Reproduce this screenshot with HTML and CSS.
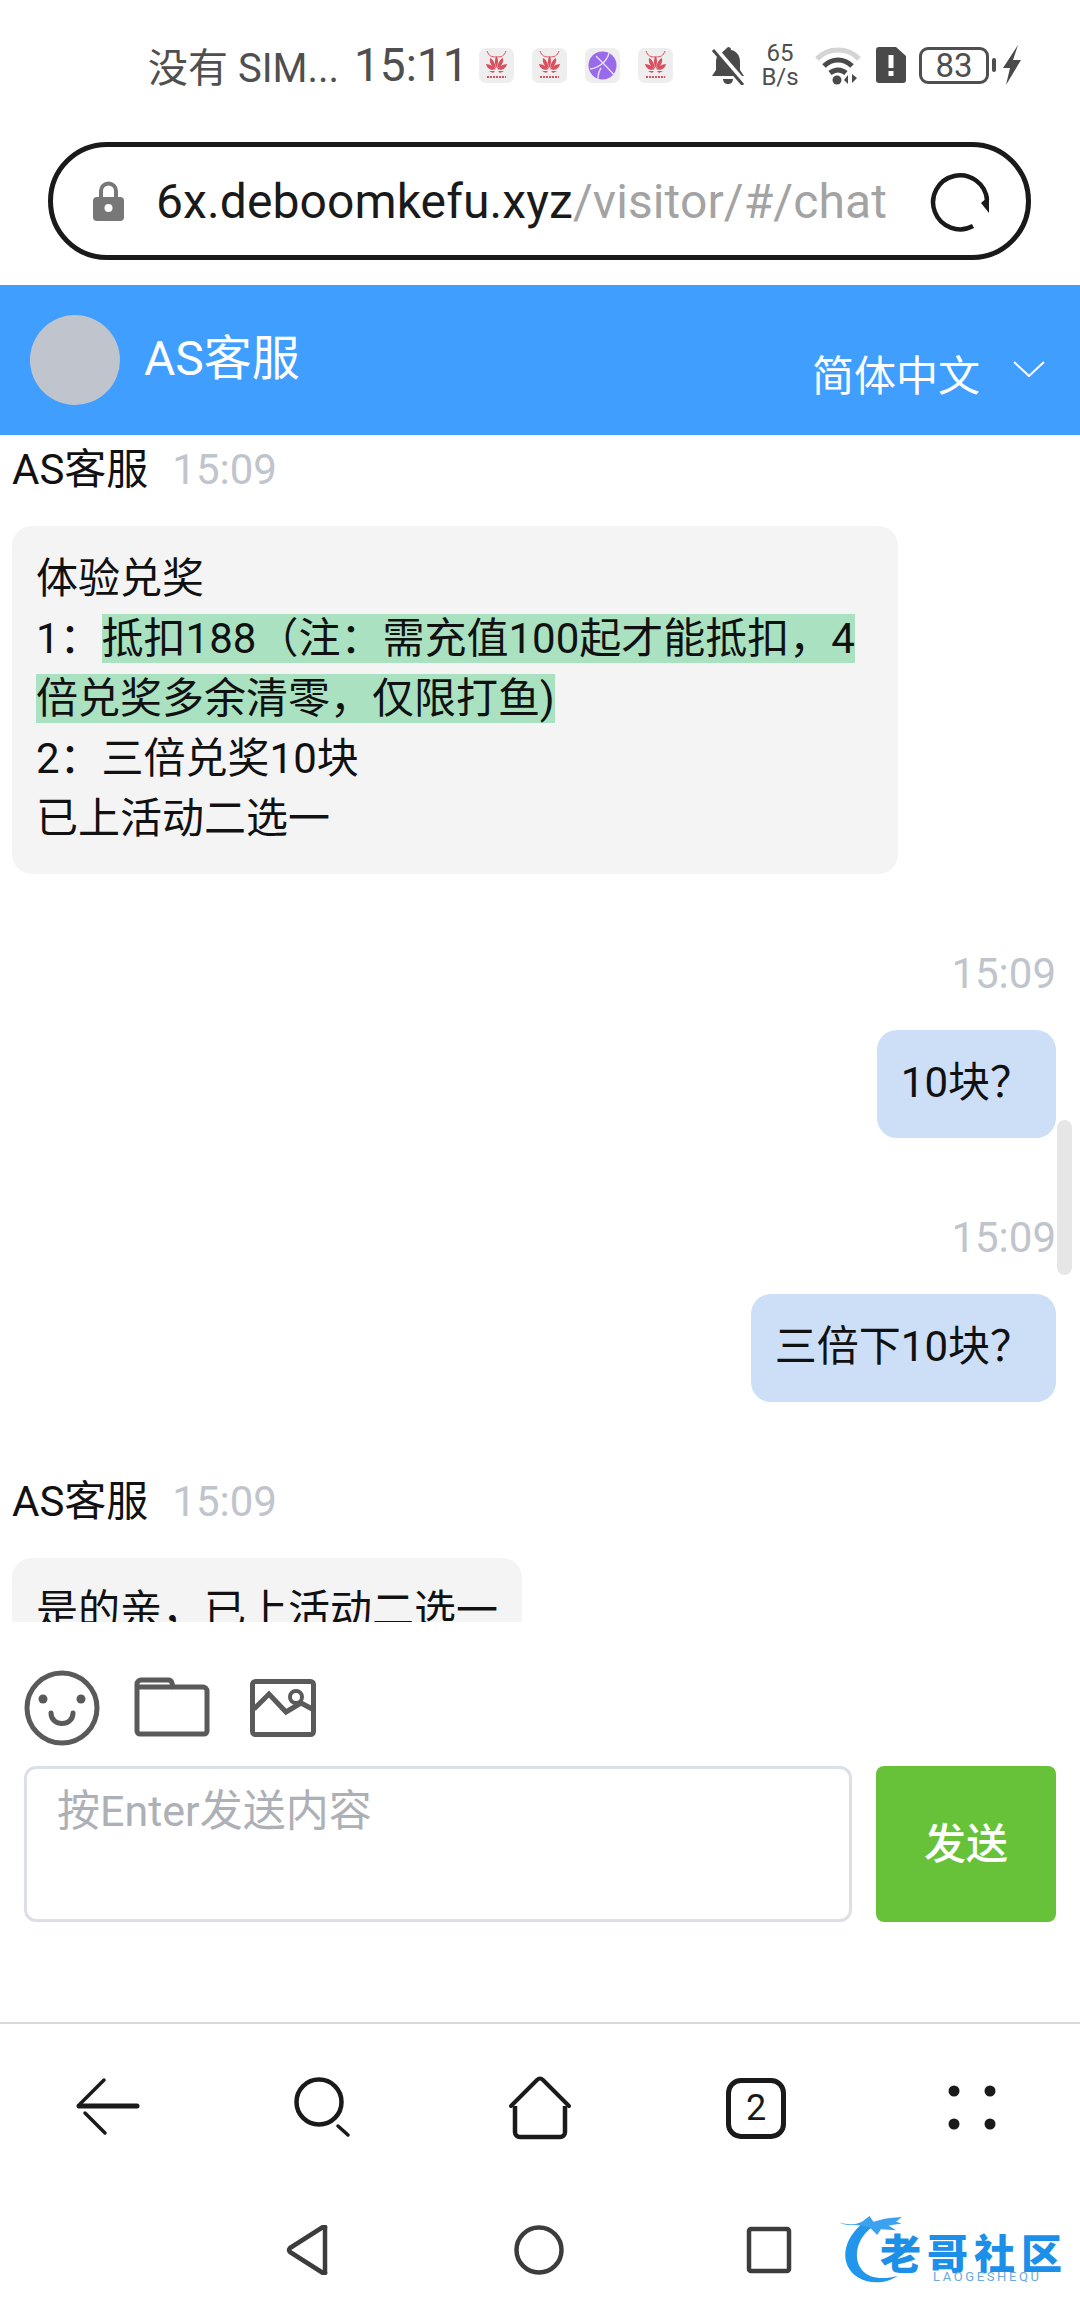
FILE: index.html
```html
<!DOCTYPE html>
<html lang="zh-CN">

<head>
    <meta charset="UTF-8">
    <meta name="viewport" content="width=device-width, initial-scale=1.0">
    <title>AS客服</title>
    <link rel="stylesheet" href="styles.css">
</head>

<body>
    <div class="phone">
        <!-- status bar -->
        <div class="status">
            <span class="carrier">没有 SIM...</span>
            <span class="clock">15:11</span>
            <div class="tiles">
                <svg class="tile" viewBox="0 0 35 35"><use href="#shop"/></svg>
                <svg class="tile" viewBox="0 0 35 35"><use href="#shop"/></svg>
                <svg class="tile" viewBox="0 0 35 35">
                    <rect width="35" height="35" rx="7" fill="#eeeeee"/>
                    <circle cx="17.5" cy="17.5" r="14" fill="#9a6be8"/>
                    <path d="M5 21C13 20 22 14 24 5M11 8c6 6 14 14 18 19M13 31c0-4 1-8 3-11" fill="none" stroke="#e6dcfb" stroke-width="1.4"/>
                </svg>
                <svg class="tile" viewBox="0 0 35 35"><use href="#shop"/></svg>
            </div>
            <svg class="st-bell" viewBox="0 0 34 40">
                <path d="M17 2c2 0 3 1 3 3 6 1 9 6 9 12v8l4 6H1l4-6v-8c0-2 .4-4 1-5z" fill="#4a4a4a"/>
                <path d="M12 34h10c0 3-2 5-5 5s-5-2-5-5z" fill="#4a4a4a"/>
                <path d="M3 3l30 35" stroke="#fff" stroke-width="6"/>
                <path d="M2 5l30 35" stroke="#4a4a4a" stroke-width="3"/>
            </svg>
            <div class="speed"><span>65</span><span>B/s</span></div>
            <svg class="st-wifi" viewBox="0 0 46 40">
                <path d="M2 14C13 2 33 2 44 14" fill="none" stroke="#d4d4d4" stroke-width="5"/>
                <path d="M9 21c8-8 20-8 28 0" fill="none" stroke="#4a4a4a" stroke-width="5"/>
                <path d="M15 28c5-4 11-4 16 0" fill="none" stroke="#4a4a4a" stroke-width="5"/>
                <circle cx="22" cy="35" r="4.5" fill="#4a4a4a"/>
                <path d="M33 39v-9l-4 5zM37 29v9l5-5z" fill="#4a4a4a"/>
            </svg>
            <svg class="st-sim" viewBox="0 0 30 36">
                <path d="M3 0h17l10 9v24a3 3 0 0 1-3 3H3a3 3 0 0 1-3-3V3a3 3 0 0 1 3-3z" fill="#4a4a4a"/>
                <rect x="12.500" y="8" width="5" height="13" fill="#fff"/>
                <rect x="12.500" y="24" width="5" height="5" fill="#fff"/>
            </svg>
            <div class="battery">83</div>
            <span class="battery-cap"></span>
            <svg class="st-bolt" viewBox="0 0 20 40"><path d="M16 0L1 23h7L4 40l15-25h-8z" fill="#4a4a4a"/></svg>
        </div>

        <!-- browser address bar -->
        <div class="address-wrap">
            <div class="address">
                <svg class="lock" viewBox="0 0 31 40">
                    <path d="M8 18v-8a7.500 7.500 0 0 1 15 0v8" fill="none" stroke="#777" stroke-width="4"/>
                    <rect y="16" width="31" height="24" rx="4" fill="#777"/>
                    <circle cx="15.500" cy="27" r="4" fill="#fff"/>
                </svg>
                <div class="url">6x.deboomkefu.xyz<span class="url-path">/visitor/#/chat</span></div>
                <svg class="reload" viewBox="0 0 62 62">
                    <path d="M44 56A27 27 0 1 1 58 30" fill="none" stroke="#1a1a1a" stroke-width="4.500"/>
                    <path d="M60 26v17l-8-10z" fill="#1a1a1a"/>
                </svg>
            </div>
        </div>

        <!-- chat header -->
        <div class="header">
            <div class="avatar"></div>
            <div class="title">AS客服</div>
            <div class="lang">简体中文</div>
            <svg class="chevron" viewBox="0 0 32 16"><path d="M1 1l15 14L31 1" fill="none" stroke="#fff" stroke-width="2"/></svg>
        </div>

        <!-- messages -->
        <div class="chat">
            <div class="msg">
                <div class="meta"><span class="name">AS客服</span><span class="time">15:09</span></div>
                <div class="bubble">体验兑奖<br>1：<span class="mark">抵扣188（注：需充值100起才能抵扣，4倍兑奖多余清零，仅限打鱼)</span><br>2：三倍兑奖10块<br>已上活动二选一</div>
            </div>
            <div class="msg mine">
                <div class="meta"><span class="time">15:09</span></div>
                <div class="bubble">10块？</div>
            </div>
            <div class="msg mine">
                <div class="meta"><span class="time">15:09</span></div>
                <div class="bubble">三倍下10块？</div>
            </div>
            <div class="msg">
                <div class="meta"><span class="name">AS客服</span><span class="time">15:09</span></div>
                <div class="bubble">是的亲，已上活动二选一</div>
            </div>
            <div class="scrollbar"></div>
        </div>

        <!-- input area -->
        <div class="composer">
            <div class="tools">
                <svg class="tool-smile" viewBox="0 0 76 76">
                    <circle cx="38" cy="38" r="35" fill="none" stroke="#5a5a5a" stroke-width="5"/>
                    <circle cx="19" cy="29" r="4.500" fill="#5a5a5a"/>
                    <circle cx="57" cy="29" r="4.500" fill="#5a5a5a"/>
                    <path d="M27 43c0 14 22 14 22 0" fill="none" stroke="#5a5a5a" stroke-width="5" stroke-linecap="round"/>
                </svg>
                <svg class="tool-folder" viewBox="0 0 76 62">
                    <path d="M3 8a4 4 0 0 1 4-4h27a4 4 0 0 1 4 3l1 4h30a4 4 0 0 1 4 4v40a3 3 0 0 1-3 3H6a3 3 0 0 1-3-3z" fill="none" stroke="#5a5a5a" stroke-width="5" stroke-linejoin="round"/>
                    <path d="M3 11h36" stroke="#5a5a5a" stroke-width="5"/>
                </svg>
                <svg class="tool-image" viewBox="0 0 66 58">
                    <rect x="2.500" y="2.500" width="61" height="53" rx="3" fill="none" stroke="#5a5a5a" stroke-width="5"/>
                    <path d="M4 30l15-15 17 18 15-9 13 7" fill="none" stroke="#5a5a5a" stroke-width="5"/>
                    <circle cx="46" cy="18" r="6" fill="none" stroke="#5a5a5a" stroke-width="4"/>
                </svg>
            </div>
            <div class="input-row">
                <textarea class="input" placeholder="按Enter发送内容"></textarea>
                <button class="send">发送</button>
            </div>
        </div>

        <!-- browser toolbar -->
        <div class="browser-nav">
            <svg viewBox="0 0 64 64">
                <path d="M3 30h58" stroke="#1a1a1a" stroke-width="5" stroke-linecap="round"/>
                <path d="M28 4L4 28M9 37l20 20" fill="none" stroke="#1a1a1a" stroke-width="3.500" stroke-linecap="round"/>
            </svg>
            <svg viewBox="0 0 64 64">
                <circle cx="27" cy="26" r="22.500" fill="none" stroke="#1a1a1a" stroke-width="4.500"/>
                <path d="M46 50l10 9" stroke="#1a1a1a" stroke-width="3.500" stroke-linecap="round"/>
            </svg>
            <svg viewBox="0 0 64 64">
                <path d="M3 30L29 4c2-2 4-2 6 0l26 26" fill="none" stroke="#1a1a1a" stroke-width="4" stroke-linecap="round"/>
                <path d="M7 30v26a5 5 0 0 0 5 5h40a5 5 0 0 0 5-5V30" fill="none" stroke="#1a1a1a" stroke-width="4.500"/>
            </svg>
            <div class="tabs-count">2</div>
            <svg viewBox="0 0 64 64">
                <circle cx="14" cy="15" r="5.500" fill="#1a1a1a"/>
                <circle cx="50" cy="15" r="5.500" fill="#1a1a1a"/>
                <circle cx="14" cy="48" r="5.500" fill="#1a1a1a"/>
                <circle cx="50" cy="48" r="5.500" fill="#1a1a1a"/>
            </svg>
        </div>

        <!-- system navigation -->
        <div class="system-nav">
            <svg viewBox="0 0 50 50"><path d="M41 3v44a1 1 0 0 1-2 1L6 27a3 3 0 0 1 0-4L39 2a1 1 0 0 1 2 1z" fill="none" stroke="#3c3c3c" stroke-width="4.500" stroke-linejoin="round"/></svg>
            <svg viewBox="0 0 50 50"><circle cx="25" cy="25" r="22.500" fill="none" stroke="#3c3c3c" stroke-width="4.500"/></svg>
            <svg viewBox="0 0 50 50"><rect x="5" y="4" width="40" height="42" rx="2" fill="none" stroke="#3c3c3c" stroke-width="4.500"/></svg>
        </div>

        <!-- watermark -->
        <div class="watermark">
            <svg class="wm-dragon" viewBox="0 0 90 76">
                <path d="M28 8C4 26 2 54 22 66c14 8 30 6 42-2-14 4-30 4-38-6C16 46 20 24 38 12z" fill="#2196ea"/>
                <path d="M2 8c10 3 18 2 24-1l8-6 4 6 12-3 8-1 10-1-6 5 6 2-14 2 8 5-16-1-4 6-8-8-10-2C16 11 8 11 2 8z" fill="#3aa2ee"/>
            </svg>
            <div class="wm-name">老哥社区</div>
            <div class="wm-sub">LAOGESHEQU</div>
        </div>

        <svg class="defs" width="0" height="0">
            <symbol id="shop" viewBox="0 0 35 35">
                <rect width="35" height="35" rx="7" fill="#eeeeee"/>
                <path d="M8 3c2 5 4 6 9.500 6S25 8 27 3" fill="none" stroke="#d9505f" stroke-width="1"/>
                <path d="M17.500 8c2.500 4 1.500 8 0 12-1.500-4-2.500-8 0-12zM11 10c4 2 5 6 6 10-4-1-7-5-6-10zM24 10c1 5-2 9-6 10 1-4 2-8 6-10zM7 16c4 0 8 3 10 5-4 2-9 0-10-5zM28 16c-1 5-6 7-10 5 2-2 6-5 10-5zM10 23h6l-2 2zM25 23h-6l2 2z" fill="#d9505f"/>
                <path d="M8 29h19" stroke="#d9505f" stroke-width="2" stroke-dasharray="2 1"/>
            </symbol>
        </svg>
    </div>
</body>

</html>
```

FILE: styles.css
```css
* {
    box-sizing: border-box;
}

body {
    margin: 0;
    background: #fff;
    font-family: Roboto, "Noto Sans CJK SC", sans-serif;
}

.phone {
    position: relative;
    width: 1080px;
    height: 2310px;
    overflow: hidden;
    display: flex;
    flex-direction: column;
}

.defs {
    position: absolute;
}

/* status bar */
.status {
    height: 130px;
    padding-left: 148px;
    display: flex;
    align-items: center;
    color: #4f4f4f;
}

.carrier {
    font-size: 40px;
    width: 194px;
    white-space: nowrap;
}

.clock {
    font-size: 46px;
    width: 125px;
    margin-left: 12px;
    white-space: nowrap;
}

.tiles {
    display: flex;
    gap: 18px;
}

.tile {
    width: 35px;
    height: 35px;
}

.st-bell {
    width: 34px;
    height: 40px;
    margin-left: 38px;
}

.speed {
    width: 40px;
    margin-left: 15px;
    display: flex;
    flex-direction: column;
    align-items: center;
    font-size: 24px;
    line-height: 24px;
}

.st-wifi {
    width: 46px;
    height: 40px;
    margin-left: 15px;
}

.st-sim {
    width: 30px;
    height: 36px;
    margin-left: 15px;
}

.battery {
    width: 70px;
    height: 37px;
    margin-left: 13px;
    border: 3px solid #4f4f4f;
    border-radius: 9px;
    font-size: 33px;
    line-height: 31px;
    text-align: center;
}

.battery-cap {
    width: 4px;
    height: 14px;
    margin-left: 3px;
    border-radius: 2px;
    background: #4f4f4f;
}

.st-bolt {
    width: 20px;
    height: 40px;
    margin-left: 6px;
}

/* address bar */
.address-wrap {
    height: 155px;
    padding: 12px 49px 0 48px;
}

.address {
    height: 118px;
    padding: 0 35px 0 40px;
    display: flex;
    align-items: center;
    border: 5px solid #1a1a1a;
    border-radius: 59px;
}

.lock {
    width: 31px;
    height: 40px;
}

.url {
    margin-left: 32px;
    flex: 1;
    font-size: 48px;
    letter-spacing: 0.1px;
    color: #1a1a1a;
    white-space: nowrap;
}

.url-path {
    color: #a3a3a3;
}

.reload {
    width: 62px;
    height: 62px;
}

/* chat header */
.header {
    height: 150px;
    padding: 0 35px 0 30px;
    display: flex;
    align-items: center;
    background: #409eff;
    color: #fff;
}

.avatar {
    width: 90px;
    height: 90px;
    border-radius: 50%;
    background: #c0c4cc;
}

.title {
    margin-left: 24px;
    flex: 1;
    font-size: 48px;
    margin-top: -12px;
}

.lang {
    font-size: 42px;
    margin-top: 24px;
}

.chevron {
    width: 32px;
    height: 16px;
    margin-left: 33px;
    margin-top: 18px;
}

/* messages */
.chat {
    position: relative;
    height: 1187px;
    padding: 5px 24px 0 12px;
    overflow: hidden;
}

.msg {
    margin-bottom: 70px;
    display: flex;
    flex-direction: column;
    align-items: flex-start;
}

.msg.mine {
    align-items: flex-end;
}

.meta {
    height: 60px;
    margin-bottom: 26px;
    font-size: 42px;
    line-height: 60px;
}

.name {
    color: #111;
    margin-right: 24px;
}

.time {
    color: #c0c4cc;
}

.bubble {
    max-width: 886px;
    padding: 23px 24px 25px;
    background: #f4f4f5;
    border-radius: 20px;
    font-size: 42px;
    line-height: 60px;
    color: #111;
}

.msg.mine .bubble {
    background: #cddff6;
}

.mark {
    background: #a9e1c1;
}

.scrollbar {
    position: absolute;
    right: 8px;
    top: 685px;
    width: 15px;
    height: 155px;
    border-radius: 8px;
    background: #e6e6e6;
}

/* input area */
.composer {
    height: 402px;
    padding: 48px 24px 0;
    border-bottom: 2px solid #d8d8d8;
}

.tools {
    height: 76px;
    display: flex;
    align-items: center;
}

.tool-smile {
    width: 76px;
    height: 76px;
}

.tool-folder {
    width: 76px;
    height: 62px;
    margin-left: 34px;
    margin-top: -2px;
}

.tool-image {
    width: 66px;
    height: 58px;
    margin-left: 40px;
}

.input-row {
    margin-top: 20px;
    display: flex;
    gap: 24px;
}

.input {
    flex: 1;
    height: 156px;
    padding: 14px 30px;
    border: 3px solid #dcdfe6;
    border-radius: 12px;
    resize: none;
    outline: none;
    font-family: inherit;
    font-size: 43px;
    line-height: 56px;
}

.input::placeholder {
    color: #adb0b6;
}

.send {
    width: 180px;
    height: 156px;
    padding: 0 0 8px;
    border: none;
    border-radius: 8px;
    background: #67c23a;
    color: #fff;
    font-family: inherit;
    font-size: 42px;
    font-weight: 500;
}

/* bottom bars */
.browser-nav {
    height: 160px;
    padding-top: 8px;
    display: grid;
    grid-template-columns: repeat(5, 216px);
    justify-items: center;
    align-items: center;
}

.browser-nav svg {
    width: 64px;
    height: 64px;
}

.tabs-count {
    width: 60px;
    height: 61px;
    border: 5px solid #1a1a1a;
    border-radius: 15px;
    font-size: 36px;
    line-height: 50px;
    text-align: center;
    color: #1a1a1a;
}

.system-nav {
    flex: 1;
    padding: 41px 0 0 284px;
    display: flex;
    align-items: flex-start;
    gap: 180px;
}

.system-nav svg {
    width: 50px;
    height: 50px;
}

/* watermark sits over the bottom corner */
.watermark {
    position: absolute;
    left: 836px;
    top: 2212px;
    width: 230px;
    height: 84px;
}

.wm-dragon {
    position: absolute;
    left: 0;
    top: 3px;
    width: 88px;
    height: 72px;
}

.wm-name {
    position: absolute;
    left: 44px;
    top: 28px;
    font-size: 41px;
    line-height: 30px;
    letter-spacing: 6px;
    font-weight: 900;
    white-space: nowrap;
    color: #1c8fe8;
}

.wm-sub {
    position: absolute;
    left: 97px;
    top: 59px;
    font-size: 13px;
    line-height: 12px;
    letter-spacing: 2.6px;
    white-space: nowrap;
    color: #6aa9dd;
}
```
